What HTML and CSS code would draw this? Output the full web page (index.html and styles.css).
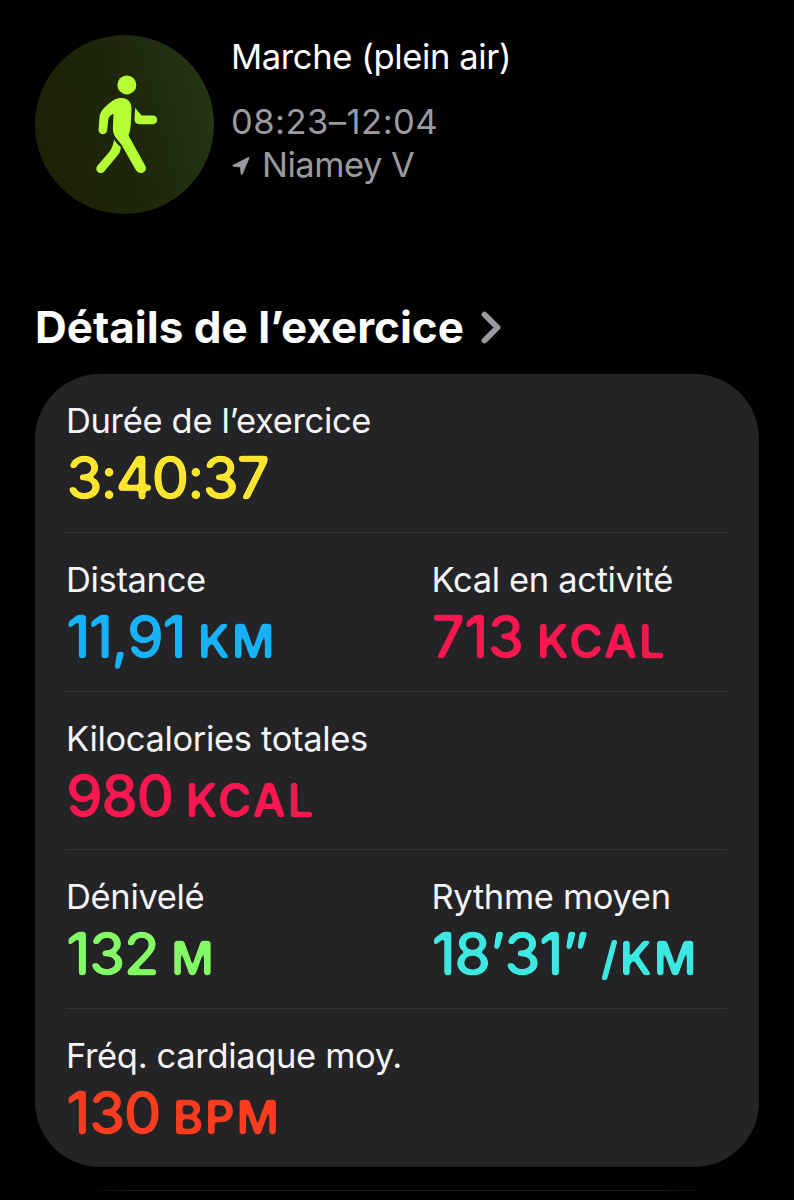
FILE: index.html
```html
<!DOCTYPE html>
<html lang="fr">

<head>
    <meta charset="utf-8">
    <meta name="viewport" content="width=device-width, initial-scale=1.0">
    <title>Marche (plein air)</title>
    <link rel="stylesheet" href="styles.css">
</head>

<body>

    <!-- softens the corners of the figures -->
    <svg class="defs" width="0" height="0" aria-hidden="true">
        <filter id="rounded" x="-5%" y="-5%" width="110%" height="110%" color-interpolation-filters="sRGB">
            <feGaussianBlur stdDeviation="1.6" />
            <feComponentTransfer>
                <feFuncA type="linear" slope="4.5" intercept="-1.45" />
            </feComponentTransfer>
        </filter>
    </svg>

    <header>
        <div class="badge">
            <svg viewBox="44 44 538 538" aria-hidden="true">
                <circle cx="320" cy="194" r="28.5" />
                <path d="M304 233 C322 233 334 245 334 264 L332 310 C331 325 329 337 325 346 L375 436 C386 455 358 469 347 450 L304 374 C298 364 278 350 278 326 L280 281 C271 285 264 291 264 300 L261 330 C259 347 235 346 235 329 L238 290 C240 274 251 264 262 254 C277 240 287 233 304 233 Z" />
                <path d="M345 263 L364 286 H399 C415 286 415 312 399 312 H358 C349 312 343 307 343 298 Z" />
                <path d="M282 358 C286 366 293 374 302 381 C301 392 299 399 293 405 L252 454 C240 467 220 451 232 436 L266 397 C275 387 279 373 282 358 Z" />
            </svg>
        </div>
        <div class="info">
            <h1>Marche (plein air)</h1>
            <p class="time">08:23–12:04</p>
            <p class="place">
                <svg viewBox="0 0 18 20" aria-hidden="true">
                    <path d="M1 9.3 L16.3 1.5 Q17.3 1.1 17 2.2 L10.2 18.3 Q9.6 19.3 9.2 18.2 L8.4 10.9 L1.2 10.2 Q0.2 10 1 9.3 Z" />
                </svg>
                Niamey V
            </p>
        </div>
    </header>

    <h2>
        Détails de l’exercice
        <svg viewBox="0 0 20 33" aria-hidden="true">
            <path d="M3.5 3.5 L16.5 16.5 L3.5 29.5" />
        </svg>
    </h2>

    <section class="card">
        <div class="row">
            <article>
                <h3>Durée de l’exercice</h3>
                <p class="value duration">3:40:37</p>
            </article>
        </div>
        <div class="row">
            <article>
                <h3>Distance</h3>
                <p class="value distance">11,91 <span>KM</span></p>
            </article>
            <article>
                <h3>Kcal en activité</h3>
                <p class="value active">713 <span>KCAL</span></p>
            </article>
        </div>
        <div class="row">
            <article>
                <h3>Kilocalories totales</h3>
                <p class="value energy">980 <span>KCAL</span></p>
            </article>
        </div>
        <div class="row">
            <article>
                <h3>Dénivelé</h3>
                <p class="value climb">132 <span>M</span></p>
            </article>
            <article>
                <h3>Rythme moyen</h3>
                <p class="value pace">18’31” <span>/KM</span></p>
            </article>
        </div>
        <div class="row">
            <article>
                <h3>Fréq. cardiaque moy.</h3>
                <p class="value heart">130 <span>BPM</span></p>
            </article>
        </div>
    </section>

    <div class="next"></div>

</body>

</html>
```
FILE: styles.css
```css
* {
    box-sizing: border-box;
}

body {
    margin: 0;
    padding: 35px 35px 0 35px;
    height: 1200px;
    overflow: hidden;
    background: #000;
    color: #fff;
    font-family: Inter, sans-serif;
}

h1,
h2,
h3,
p {
    margin: 0;
    white-space: nowrap;
}

.defs {
    position: absolute;
}

header {
    display: flex;
    gap: 17px;
    height: 179px;
}

.badge {
    width: 179px;
    height: 179px;
    flex: none;
    border-radius: 50%;
    background: linear-gradient(75deg, #1d2206 5%, #1d260b 50%, #263816 100%);
}

.badge svg {
    display: block;
    width: 100%;
    height: 100%;
    fill: #b5ff35;
}

.info {
    font-size: 34.5px;
    line-height: 43px;
    color: #9a9a9f;
}

h1 {
    margin-bottom: 22px;
    font-size: 34.5px;
    font-weight: 400;
    letter-spacing: -0.37px;
    color: #fff;
}

.time {
    letter-spacing: 0.49px;
}

.place {
    display: flex;
    align-items: center;
    gap: 12px;
    letter-spacing: -0.5px;
}

.place svg {
    width: 18px;
    height: 20px;
    margin: 2px 0 0 1px;
    fill: #9a9a9f;
    stroke: #9a9a9f;
    stroke-width: 0.8;
}

h2 {
    display: flex;
    align-items: center;
    gap: 17px;
    margin: 86px 0 20px;
    font-size: 44px;
    line-height: 54px;
    font-weight: 700;
}

h2 svg {
    width: 20px;
    height: 33px;
    fill: none;
    stroke: #9a9a9f;
    stroke-width: 5.8;
    stroke-linecap: round;
    stroke-linejoin: round;
}

.card {
    padding: 0 32px 0 31px;
    border-radius: 65px;
    background: #242426;
}

.row {
    display: grid;
    grid-template-columns: 365.5px 1fr;
    height: 158.75px;
    padding-top: 26px;
    border-bottom: 1px solid #353537;
}

.row:last-child {
    height: 158px;
    border-bottom: 0;
}

h3 {
    margin-bottom: 4px;
    font-size: 34.5px;
    line-height: 42px;
    font-weight: 400;
    letter-spacing: -0.34px;
    color: #f5f5f7;
}

.value {
    font-size: 58.5px;
    line-height: 64px;
    font-weight: 500;
    letter-spacing: -1.6px;
    word-spacing: -1px;
    filter: url(#rounded);
}

.value span {
    font-size: 46px;
    font-weight: 600;
    letter-spacing: 1.8px;
}

.duration {
    color: #fbe52f;
    letter-spacing: -2.4px;
}

.distance {
    color: #16b2f8;
}

.active,
.energy {
    color: #f9174f;
}

.active {
    letter-spacing: -0.9px;
}

.climb {
    color: #83fb66;
}

.pace {
    color: #3de8e2;
}

.heart {
    color: #fb3c1f;
}

.next {
    height: 1px;
    margin: 23px 42px 0;
    background: linear-gradient(90deg, #000, #1c1c1e 10%, #1c1c1e 90%, #000);
}
```
